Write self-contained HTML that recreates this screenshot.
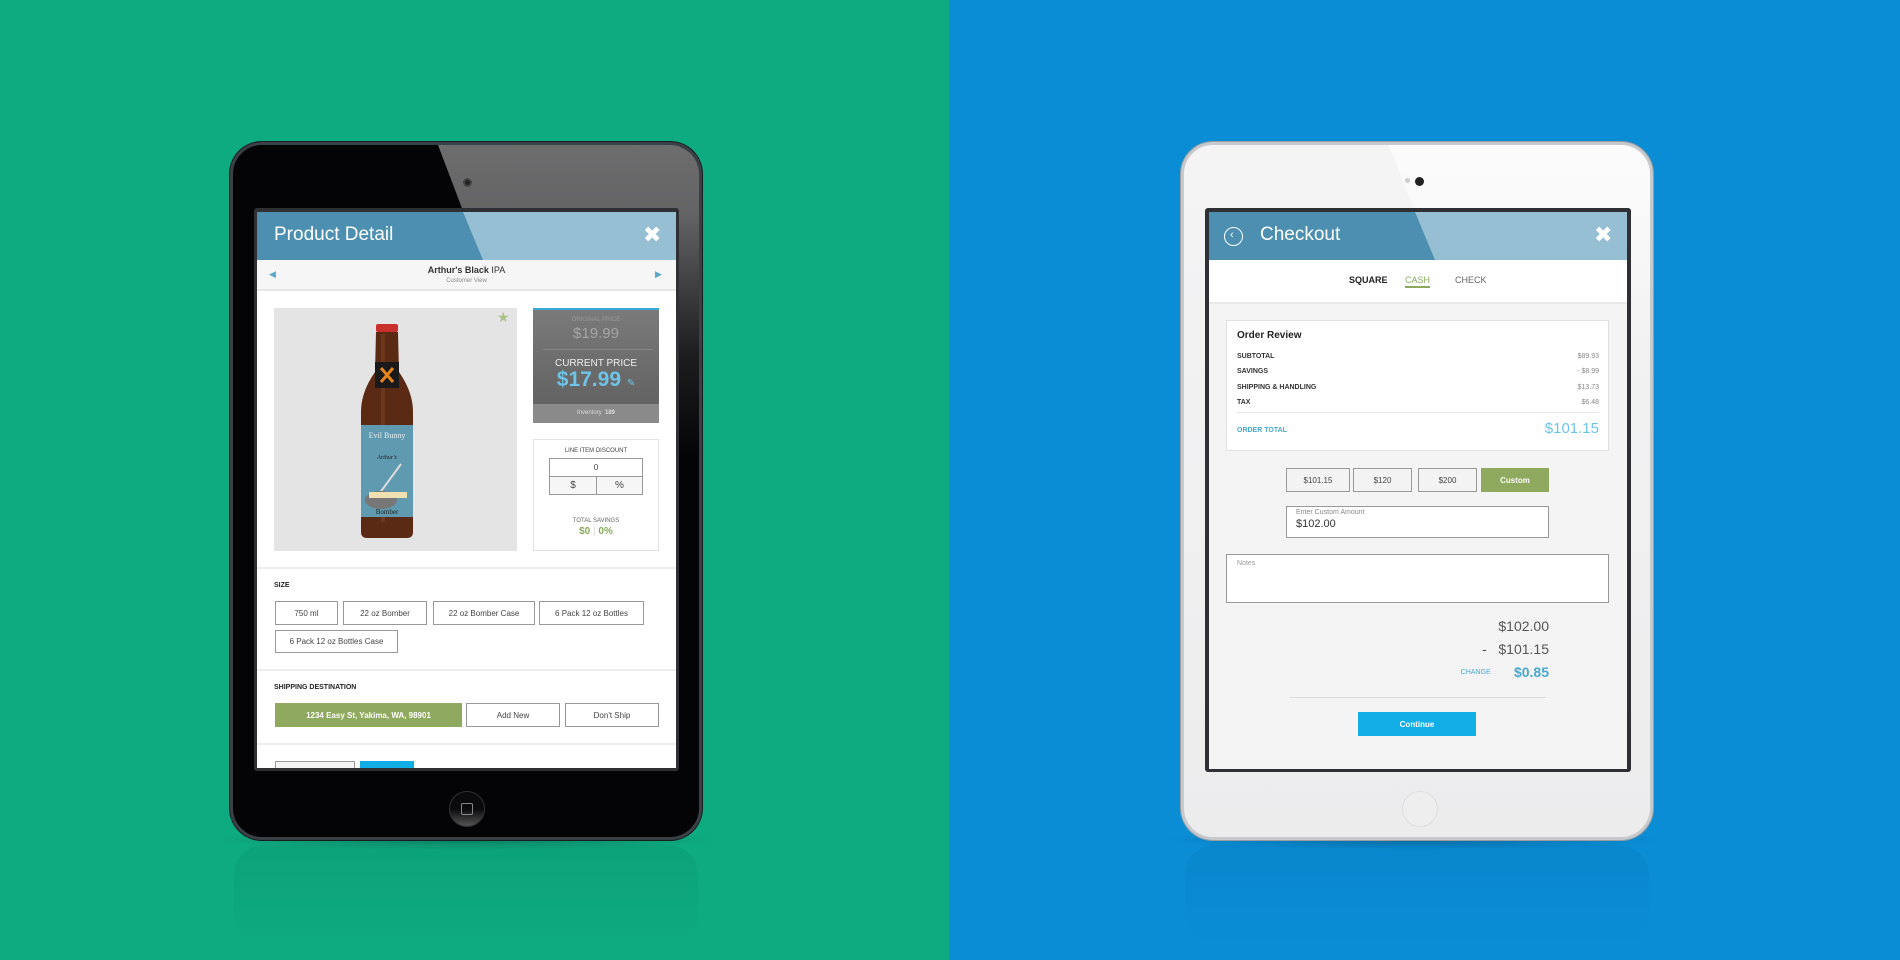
<!DOCTYPE html>
<html><head><meta charset="utf-8"><style>
*{margin:0;padding:0;box-sizing:border-box}
body{width:1900px;height:960px;overflow:hidden;position:relative;font-family:"Liberation Sans","DejaVu Sans",sans-serif;background:#0ca97f}
.abs{position:absolute}
.bgL{left:0;top:0;width:949px;height:960px;background:#0eaa80}
.bgR{left:949px;top:0;width:951px;height:960px;background:#0a8dd5}
.refl{border-radius:30px;opacity:.3}
.btn{position:absolute;border:1px solid #999;background:#fff;font-size:8px;color:#444;text-align:center;display:flex;align-items:center;justify-content:center}
.t{position:absolute;white-space:nowrap}
</style></head><body>
<div class="abs bgL"></div><div class="abs bgR"></div>

<div class="abs" style="left:210px;top:830px;width:510px;height:20px;background:radial-gradient(ellipse at center,rgba(0,0,0,.25),rgba(0,0,0,0) 70%)"></div>
<div class="abs refl" style="left:234px;top:845px;width:464px;height:100px;background:linear-gradient(#08906c,rgba(12,169,127,0))"></div>
<div class="abs" style="left:1160px;top:830px;width:510px;height:20px;background:radial-gradient(ellipse at center,rgba(0,0,0,.25),rgba(0,0,0,0) 70%)"></div>
<div class="abs refl" style="left:1185px;top:845px;width:464px;height:100px;background:linear-gradient(#0778b8,rgba(10,141,212,0))"></div>

<!-- LEFT TABLET -->
<div class="abs" style="left:230px;top:142px;width:472px;height:698px;border-radius:32px;background:#040406;border:3px solid #3a4046;box-shadow:0 0 0 1px #1a1d20;overflow:hidden">
  <div class="abs" style="left:0;top:0;width:472px;height:698px;background:linear-gradient(rgba(255,255,255,.42),rgba(255,255,255,.38) 10%,rgba(255,255,255,.1) 30%,rgba(255,255,255,0) 45%);clip-path:polygon(205px 0,472px 0,472px 698px,470px 698px)"></div>
  <div class="abs" style="left:230px;top:33px;width:9px;height:9px;border-radius:50%;background:#222;border:2px solid #444"></div>
  <div class="abs" style="left:216px;top:646px;width:36px;height:36px;border-radius:50%;background:linear-gradient(#0a0a0c 50%,#555 100%);border:1px solid #333"></div>
  <div class="abs" style="left:228px;top:658px;width:12px;height:12px;border:1px solid #888;border-radius:2px"></div>
</div>
<div class="abs" style="left:254px;top:208px;width:425px;height:563px;background:#2e3033;border-radius:3px"></div>
<div class="abs" style="left:257px;top:212px;width:419px;height:556px;background:#fff;overflow:hidden">
  <div class="abs" style="left:0;top:0;width:419px;height:48px;background:#97bfd3"></div>
  <div class="abs" style="left:0;top:0;width:419px;height:48px;background:#4c8fb0;clip-path:polygon(0 0,206px 0,226px 48px,0 48px)"></div>
  <div class="t" style="left:17px;top:12px;font-size:19px;color:#fff">Product Detail</div>
  <div class="t" style="left:386px;top:10px;font-size:22px;color:#fff;font-weight:bold">✖</div>
  <div class="abs" style="left:0;top:48px;width:419px;height:31px;background:#f6f6f6;border-bottom:2px solid #e6e6e6"></div>
  <div class="t" style="left:12px;top:57px;font-size:9px;color:#5aa7c9">◀</div>
  <div class="t" style="left:398px;top:57px;font-size:9px;color:#5aa7c9">▶</div>
  <div class="t" style="left:0;width:419px;text-align:center;top:53px;font-size:9px;color:#333"><b>Arthur's Black</b> IPA</div>
  <div class="t" style="left:0;width:419px;text-align:center;top:66px;font-size:6px;color:#888">Customer View</div>
  <div class="abs" style="left:17px;top:96px;width:243px;height:243px;background:#e4e4e4"></div>
  <div class="t" style="left:240px;top:97px;font-size:14px;color:#a8c38a">★</div>
  <svg class="abs" style="left:100px;top:110px" width="60" height="220" viewBox="0 0 60 220">
    <rect x="19" y="2" width="22" height="8" rx="2" fill="#c9302c"/>
    <path d="M19 10 L41 10 L42 50 Q56 70 56 90 L56 210 Q56 216 50 216 L10 216 Q4 216 4 210 L4 90 Q4 70 18 50 Z" fill="#5a2a14"/>
    <path d="M24 12 L28 12 L28 200 L24 200 Z" fill="#8a4a2a" opacity=".4"/>
    <rect x="18" y="40" width="24" height="26" fill="#1a1a1a"/>
    <path d="M24 46 L36 60 M36 46 L24 60" stroke="#e8861d" stroke-width="3"/>
    <rect x="4" y="103" width="52" height="92" fill="#5f9ab0"/>
    <text x="30" y="116" font-size="8" text-anchor="middle" fill="#e8eef0" font-family="Liberation Serif">Evil Bunny</text>
    <text x="30" y="137" font-size="6" text-anchor="middle" fill="#222" font-family="Liberation Serif" font-style="italic">Arthur's</text>
    <path d="M44 142 L22 172" stroke="#ddd" stroke-width="2"/>
    <ellipse cx="24" cy="178" rx="16" ry="9" fill="#777"/>
    <rect x="12" y="170" width="38" height="6" fill="#eee0b0"/>
    <text x="30" y="192" font-size="7" text-anchor="middle" fill="#222" font-family="Liberation Serif">Bomber</text>
  </svg>
  <div class="abs" style="left:276px;top:96px;width:126px;height:115px;background:linear-gradient(#7a7a7a,#5e5e5e);border-top:2px solid #3aa9d6"></div>
  <div class="abs" style="left:276px;top:192px;width:126px;height:19px;background:#8a8a8a"></div>
  <div class="abs" style="left:286px;top:137px;width:110px;height:1px;background:#888"></div>
  <div class="t" style="left:276px;width:126px;text-align:center;top:105px;font-size:6px;color:#999">ORIGINAL PRICE</div>
  <div class="t" style="left:276px;width:126px;text-align:center;top:113px;font-size:15px;color:#a5a5a5">$19.99</div>
  <div class="t" style="left:276px;width:126px;text-align:center;top:146px;font-size:10px;color:#eee">CURRENT PRICE</div>
  <div class="t" style="left:276px;width:126px;text-align:center;top:156px;font-size:21px;color:#6ec4e6;font-weight:bold">$17.99 <span style="font-size:10px">✎</span></div>
  <div class="t" style="left:276px;width:126px;text-align:center;top:198px;font-size:6px;color:#ddd">Inventory &nbsp;<b>189</b></div>
  <div class="abs" style="left:276px;top:227px;width:126px;height:112px;border:1px solid #e3e3e3"></div>
  <div class="t" style="left:276px;width:126px;text-align:center;top:236px;font-size:6px;color:#444">LINE ITEM DISCOUNT</div>
  <div class="btn" style="left:292px;top:246px;width:94px;height:19px;font-size:8px">0</div>
  <div class="btn" style="left:292px;top:264px;width:48px;height:19px;font-size:10px;background:#f6f6f6">$</div>
  <div class="btn" style="left:339px;top:264px;width:47px;height:19px;font-size:10px;background:#f6f6f6">%</div>
  <div class="t" style="left:276px;width:126px;text-align:center;top:306px;font-size:6px;color:#666">TOTAL SAVINGS</div>
  <div class="t" style="left:276px;width:126px;text-align:center;top:314px;font-size:10px;color:#8aab5c;font-weight:bold">$0 <span style="color:#ddd;font-weight:normal">|</span> 0%</div>
  <div class="abs" style="left:0;top:355px;width:419px;height:2px;background:#eee"></div>
  <div class="t" style="left:17px;top:370px;font-size:7px;color:#222;font-weight:bold">SIZE</div>
  <div class="btn" style="left:18px;top:389px;width:63px;height:24px">750 ml</div>
  <div class="btn" style="left:86px;top:389px;width:84px;height:24px">22 oz Bomber</div>
  <div class="btn" style="left:176px;top:389px;width:102px;height:24px">22 oz Bomber Case</div>
  <div class="btn" style="left:282px;top:389px;width:105px;height:24px">6 Pack 12 oz Bottles</div>
  <div class="btn" style="left:18px;top:418px;width:123px;height:23px">6 Pack 12 oz Bottles Case</div>
  <div class="abs" style="left:0;top:457px;width:419px;height:2px;background:#eee"></div>
  <div class="t" style="left:17px;top:472px;font-size:7px;color:#222;font-weight:bold">SHIPPING DESTINATION</div>
  <div class="btn" style="left:18px;top:491px;width:187px;height:24px;background:#8fa95e;border-color:#8fa95e;color:#fff;font-weight:bold">1234 Easy St, Yakima, WA, 98901</div>
  <div class="btn" style="left:209px;top:491px;width:94px;height:24px">Add New</div>
  <div class="btn" style="left:308px;top:491px;width:94px;height:24px">Don't Ship</div>
  <div class="abs" style="left:0;top:531px;width:419px;height:2px;background:#eee"></div>
  <div class="btn" style="left:18px;top:549px;width:80px;height:20px;background:#f3f3f3"></div>
  <div class="abs" style="left:103px;top:549px;width:54px;height:20px;background:#11aee8"></div>
</div>

<!-- RIGHT TABLET -->
<div class="abs" style="left:1181px;top:142px;width:472px;height:698px;border-radius:32px;background:linear-gradient(#f4f4f5,#ececed);border:3px solid #c8c9cc;box-shadow:0 0 0 1px #9a9ca0;overflow:hidden">
  <div class="abs" style="left:0;top:0;width:472px;height:698px;background:linear-gradient(rgba(255,255,255,.7),rgba(255,255,255,0) 30%);clip-path:polygon(205px 0,472px 0,472px 698px,470px 698px)"></div>
  <div class="abs" style="left:221px;top:33px;width:5px;height:5px;border-radius:50%;background:#ccc"></div>
  <div class="abs" style="left:231px;top:32px;width:9px;height:9px;border-radius:50%;background:#222"></div>
  <div class="abs" style="left:218px;top:646px;width:36px;height:36px;border-radius:50%;background:#eee;border:1px solid #ddd"></div>
</div>
<div class="abs" style="left:1205px;top:208px;width:426px;height:564px;background:#2e3033;border-radius:3px"></div>
<div class="abs" style="left:1209px;top:212px;width:418px;height:557px;background:#f4f4f4;overflow:hidden">
  <div class="abs" style="left:0;top:0;width:418px;height:48px;background:#97bfd3"></div>
  <div class="abs" style="left:0;top:0;width:418px;height:48px;background:#4c8fb0;clip-path:polygon(0 0,206px 0,226px 48px,0 48px)"></div>
  <div class="abs" style="left:15px;top:15px;width:19px;height:19px;border:1.5px solid #fff;border-radius:50%"></div>
  <div class="t" style="left:21px;top:17px;font-size:11px;color:#fff">‹</div>
  <div class="t" style="left:51px;top:12px;font-size:19px;color:#fff">Checkout</div>
  <div class="t" style="left:385px;top:10px;font-size:22px;color:#fff;font-weight:bold">✖</div>
  <div class="abs" style="left:0;top:48px;width:418px;height:44px;background:#fff;border-bottom:2px solid #e8e8e8"></div>
  <div class="t" style="left:140px;top:63px;font-size:9px;color:#222;font-weight:bold">SQUARE</div>
  <div class="t" style="left:196px;top:63px;font-size:9px;color:#8aab5c;border-bottom:2px solid #8aab5c;padding-bottom:1px">CASH</div>
  <div class="t" style="left:246px;top:63px;font-size:9px;color:#666">CHECK</div>
  <div class="abs" style="left:17px;top:108px;width:383px;height:131px;background:#fff;border:1px solid #e0e0e0"></div>
  <div class="t" style="left:28px;top:118px;font-size:10px;color:#222;font-weight:bold">Order Review</div>
  <div class="t" style="left:28px;top:137px;font-size:7px;color:#333;font-weight:bold;line-height:15.3px">SUBTOTAL<br>SAVINGS<br>SHIPPING &amp; HANDLING<br>TAX</div>
  <div class="t" style="left:300px;width:90px;text-align:right;top:137px;font-size:7px;color:#888;line-height:15.3px">$89.93<br>- $8.99<br>$13.73<br>$6.48</div>
  <div class="abs" style="left:28px;top:200px;width:362px;height:1px;background:#e8e8e8"></div>
  <div class="t" style="left:28px;top:215px;font-size:7px;color:#4aa8cf;font-weight:bold">ORDER TOTAL</div>
  <div class="t" style="left:280px;width:110px;text-align:right;top:208px;font-size:15px;color:#6ec4e6">$101.15</div>
  <div class="btn" style="left:77px;top:256px;width:64px;height:24px;background:#f3f3f3">$101.15</div>
  <div class="btn" style="left:144px;top:256px;width:59px;height:24px;background:#f3f3f3">$120</div>
  <div class="btn" style="left:209px;top:256px;width:59px;height:24px;background:#f3f3f3">$200</div>
  <div class="btn" style="left:272px;top:256px;width:68px;height:24px;background:#8fa95e;border-color:#8fa95e;color:#fff;font-weight:bold">Custom</div>
  <div class="abs" style="left:77px;top:294px;width:263px;height:32px;background:#fff;border:1px solid #999"></div>
  <div class="t" style="left:87px;top:297px;font-size:7px;color:#888">Enter Custom Amount</div>
  <div class="t" style="left:87px;top:306px;font-size:11px;color:#333">$102.00</div>
  <div class="abs" style="left:17px;top:342px;width:383px;height:49px;background:#fff;border:1px solid #999"></div>
  <div class="t" style="left:28px;top:348px;font-size:7px;color:#999">Notes</div>
  <div class="t" style="left:200px;width:140px;text-align:right;top:406px;font-size:14px;color:#555">$102.00</div>
  <div class="t" style="left:200px;width:140px;text-align:right;top:429px;font-size:14px;color:#555">-&nbsp;&nbsp;&nbsp;$101.15</div>
  <div class="t" style="left:200px;width:140px;text-align:right;top:452px;font-size:14px;color:#4aa8cf;font-weight:bold"><span style="font-size:7px;font-weight:normal;vertical-align:3px">CHANGE</span>&nbsp;&nbsp;&nbsp;&nbsp;&nbsp;&nbsp;$0.85</div>
  <div class="abs" style="left:80px;top:485px;width:257px;height:1px;background:#ddd"></div>
  <div class="btn" style="left:149px;top:500px;width:118px;height:24px;background:#11aee8;border-color:#11aee8;color:#fff;font-weight:bold">Continue</div>
</div>
</body></html>
